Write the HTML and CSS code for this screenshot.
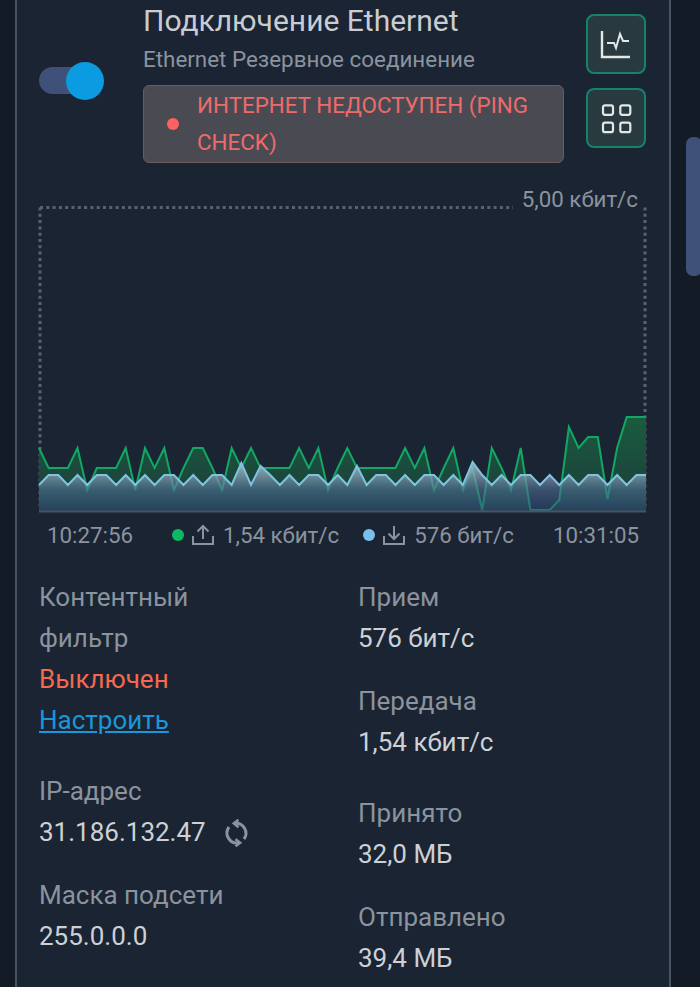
FILE: index.html
```html
<!DOCTYPE html>
<html>
<head>
	<title>Подключение Ethernet</title>
	<link rel="stylesheet" href="styles.css">
</head>
<body>
	<div class="page">
		<div class="card">
			<div class="header">
				<div class="toggle"><div class="knob"></div></div>
				<div class="info">
					<div class="title">Подключение Ethernet</div>
					<div class="subtitle">Ethernet Резервное соединение</div>
					<div class="status">
						<span class="status-dot"></span>
						<span class="status-text">ИНТЕРНЕТ НЕДОСТУПЕН (PING CHECK)</span>
					</div>
				</div>
				<div class="actions">
					<button class="icon-btn">
						<svg width="32" height="32" viewBox="0 0 32 32" fill="none" stroke="#e4e7e6" stroke-width="2.400">
							<path d="M2 3V29H30"/>
							<path d="M7 15H14L16 20L20 6L23 13H29" stroke-width="2"/>
						</svg>
					</button>
					<button class="icon-btn">
						<svg width="32" height="32" viewBox="0 0 32 32" fill="none" stroke="#e4e7e6" stroke-width="2.200">
							<rect x="3" y="3.300" width="10" height="9.500" rx="2"/>
							<rect x="20.300" y="3.300" width="10" height="9.500" rx="2"/>
							<rect x="3" y="20.700" width="10" height="9.500" rx="2"/>
							<rect x="20.300" y="20.700" width="10" height="9.500" rx="2"/>
						</svg>
					</button>
				</div>
			</div>

			<div class="chart">
				<svg class="chart-svg" width="612" height="308" viewBox="37 205 612 308" fill="none">
					<defs>
						<linearGradient id="greenFill" gradientUnits="userSpaceOnUse" x1="0" y1="417" x2="0" y2="511">
							<stop offset="0" stop-color="#1a5c3e"/>
							<stop offset="1" stop-color="#1c3c3c"/>
						</linearGradient>
						<linearGradient id="blueFill" gradientUnits="userSpaceOnUse" x1="0" y1="462" x2="0" y2="511">
							<stop offset="0" stop-color="#a8c0cc" stop-opacity="0.900"/>
							<stop offset="0.270" stop-color="#89a1b5" stop-opacity="0.750"/>
							<stop offset="0.570" stop-color="#4e6f93" stop-opacity="0.600"/>
							<stop offset="1" stop-color="#2e4a7c" stop-opacity="0.500"/>
						</linearGradient>
					</defs>
					<path class="grid" d="M40 207.500H513M40 207.500V510M645 207.500V510"/>
					<polygon fill="url(#greenFill)" points="39,511 39,448 48.600,468 58.300,468 67.900,468 77.500,448 87.200,490 96.800,468 106.400,468 116.100,468 125.700,448 135.300,490 145,448 154.600,468 164.300,448 173.900,490 183.500,468 193.200,448 202.800,448 212.400,468 222.100,490 231.700,448 241.300,468 251,448 260.600,468 270.200,468 279.900,468 289.500,468 299.100,448 308.800,468 318.400,448 328,490 337.700,468 347.300,448 357,468 366.600,468 376.200,468 385.900,468 395.500,468 405.100,448 414.800,468 424.400,448 434,490 443.700,468 453.300,448 462.900,490 472.600,468 482.200,510 491.800,448 501.500,468 511.100,490 520.700,448 530.400,510 540,510 549.700,510 559.300,500 568.900,427 578.600,448 588.200,437 597.800,437 607.500,499 617.100,448 626.700,417 636.400,417 646,417 646,511"/>
					<polyline class="line-up" points="39,448 48.600,468 58.300,468 67.900,468 77.500,448 87.200,490 96.800,468 106.400,468 116.100,468 125.700,448 135.300,490 145,448 154.600,468 164.300,448 173.900,490 183.500,468 193.200,448 202.800,448 212.400,468 222.100,490 231.700,448 241.300,468 251,448 260.600,468 270.200,468 279.900,468 289.500,468 299.100,448 308.800,468 318.400,448 328,490 337.700,468 347.300,448 357,468 366.600,468 376.200,468 385.900,468 395.500,468 405.100,448 414.800,468 424.400,448 434,490 443.700,468 453.300,448 462.900,490 472.600,468 482.200,510 491.800,448 501.500,468 511.100,490 520.700,448 530.400,510 540,510 549.700,510 559.300,500 568.900,427 578.600,448 588.200,437 597.800,437 607.500,499 617.100,448 626.700,417 636.400,417 646,417"/>
					<polygon fill="url(#blueFill)" points="39,511 39,485 48.600,475 58.300,475 67.900,485 77.500,475 87.200,485 96.800,475 106.400,475 116.100,485 125.700,475 135.300,485 145,475 154.600,485 164.300,475 173.900,475 183.500,485 193.200,475 202.800,485 212.400,475 222.100,475 231.700,485 241.300,463 251,485 260.600,466 270.200,475 279.900,485 289.500,475 299.100,485 308.800,475 318.400,475 328,485 337.700,475 347.300,485 357,466 366.600,485 376.200,475 385.900,475 395.500,485 405.100,475 414.800,485 424.400,475 434,475 443.700,485 453.300,475 462.900,485 472.600,462 482.200,475 491.800,485 501.500,475 511.100,485 520.700,475 530.400,475 540,485 549.700,475 559.300,485 568.900,475 578.600,485 588.200,475 597.800,475 607.500,485 617.100,475 626.700,485 636.400,475 646,475 646,511"/>
					<polyline class="line-down" points="39,485 48.600,475 58.300,475 67.900,485 77.500,475 87.200,485 96.800,475 106.400,475 116.100,485 125.700,475 135.300,485 145,475 154.600,485 164.300,475 173.900,475 183.500,485 193.200,475 202.800,485 212.400,475 222.100,475 231.700,485 241.300,463 251,485 260.600,466 270.200,475 279.900,485 289.500,475 299.100,485 308.800,475 318.400,475 328,485 337.700,475 347.300,485 357,466 366.600,485 376.200,475 385.900,475 395.500,485 405.100,475 414.800,485 424.400,475 434,475 443.700,485 453.300,475 462.900,485 472.600,462 482.200,475 491.800,485 501.500,475 511.100,485 520.700,475 530.400,475 540,485 549.700,475 559.300,485 568.900,475 578.600,485 588.200,475 597.800,475 607.500,485 617.100,475 626.700,485 636.400,475 646,475"/>
					<path class="axis" d="M39 511.500H646"/>
				</svg>
				<div class="chart-max">5,00 кбит/с</div>
			</div>

			<div class="legend">
				<span>10:27:56</span>
				<div class="legend-items">
					<span class="legend-dot green"></span>
					<svg class="legend-icon" width="24" height="22" viewBox="0 0 24 22" fill="none" stroke="#8b939e" stroke-width="2">
						<path d="M12 15V2M6.500 7.500L12 2L17.500 7.500M2 12V20H22V12"/>
					</svg>
					<span class="legend-value first">1,54 кбит/с</span>
					<span class="legend-dot blue"></span>
					<svg class="legend-icon" width="24" height="22" viewBox="0 0 24 22" fill="none" stroke="#8b939e" stroke-width="2">
						<path d="M12 2V15M6.500 9.500L12 15L17.500 9.500M2 12V20H22V12"/>
					</svg>
					<span class="legend-value">576 бит/с</span>
				</div>
				<span>10:31:05</span>
			</div>

			<div class="details">
				<div class="column">
					<div class="field wide">
						<div class="label">Контентный фильтр</div>
						<div class="off">Выключен</div>
						<a class="link" href="#">Настроить</a>
					</div>
					<div class="field">
						<div class="label">IP-адрес</div>
						<div class="value ip">31.186.132.47
							<svg width="30" height="30" viewBox="0 0 30 30" fill="none" stroke="#8b939e" stroke-width="3">
								<path d="M13 5.200A10 10 0 0 1 22 21"/>
								<path d="M17 24.800A10 10 0 0 1 7 9"/>
								<path d="M16.500 1.800L11.800 5.300L16.500 9.200" stroke-width="2.500"/>
								<path d="M13.500 21.300L18.200 24.800L13.500 28.300" stroke-width="2.500"/>
							</svg>
						</div>
					</div>
					<div class="field">
						<div class="label">Маска подсети</div>
						<div class="value">255.0.0.0</div>
					</div>
				</div>
				<div class="column">
					<div class="field">
						<div class="label">Прием</div>
						<div class="value">576 бит/с</div>
					</div>
					<div class="field wide">
						<div class="label">Передача</div>
						<div class="value">1,54 кбит/с</div>
					</div>
					<div class="field">
						<div class="label">Принято</div>
						<div class="value">32,0 МБ</div>
					</div>
					<div class="field">
						<div class="label">Отправлено</div>
						<div class="value">39,4 МБ</div>
					</div>
				</div>
			</div>
		</div>
		<div class="scroll-track"><div class="scroll-thumb"></div></div>
	</div>
</body>
</html>
```

FILE: styles.css
```css
html, body {
	margin: 0;
	padding: 0;
	background-color: #131b27;
}

.page {
	display: flex;
	width: 700px;
	height: 987px;
	overflow: hidden;
	font-family: Roboto, sans-serif;
}

.card {
	box-sizing: border-box;
	flex: none;
	width: 656px;
	margin-left: 15px;
	padding-left: 22px;
	background-color: #1a2433;
	border-left: 2px solid #4a5260;
	border-right: 2px solid #4a5260;
}

/* header */
.header {
	display: flex;
	height: 163px;
	padding-top: 4px;
	box-sizing: border-box;
}

.toggle {
	position: relative;
	width: 62px;
	height: 27px;
	margin-top: 63px;
	background-color: #3f5178;
	border-radius: 14px;
}

.knob {
	position: absolute;
	left: 27px;
	top: -5px;
	width: 38px;
	height: 38px;
	border-radius: 50%;
	background-color: #0a9be0;
}

.info {
	width: 421px;
	margin-left: 42px;
}

.title {
	font-size: 30px;
	line-height: 34px;
	color: #c9ccd0;
}

.subtitle {
	font-size: 22.400px;
	line-height: 30px;
	margin-top: 6px;
	color: #8b939e;
}

.status {
	display: flex;
	align-items: center;
	box-sizing: border-box;
	height: 78px;
	margin-top: 11px;
	padding-left: 23px;
	padding-right: 20px;
	background-color: #4a4b52;
	border: 1.500px solid #6f5a58;
	border-radius: 6px;
}

.status-dot {
	flex: none;
	width: 12px;
	height: 12px;
	border-radius: 50%;
	background-color: #ff6161;
}

.status-text {
	margin-left: 18px;
	font-size: 22.400px;
	line-height: 37px;
	color: #ee6a6b;
}

.actions {
	display: flex;
	flex-direction: column;
	gap: 14px;
	margin-left: 22px;
	margin-top: 10px;
}

.icon-btn {
	display: flex;
	align-items: center;
	justify-content: center;
	width: 60px;
	height: 60px;
	padding: 0;
	background-color: #283a40;
	border: 2px solid #148467;
	border-radius: 8px;
}

/* chart */
.chart {
	position: relative;
	height: 308px;
	margin-top: 42px;
}

.chart-svg {
	display: block;
	margin-left: -2px;
}

.grid {
	stroke: #5a626d;
	stroke-width: 3;
	stroke-dasharray: 3 3.300;
}

.line-up {
	stroke: #12a765;
	stroke-width: 2;
}

.line-down {
	stroke: #7fc4de;
	stroke-width: 2;
}

.axis {
	stroke: #4b5360;
	stroke-width: 2;
}

.chart-max {
	position: absolute;
	right: 31px;
	top: -20px;
	font-size: 22.300px;
	line-height: 28px;
	color: #8b939e;
}

.legend {
	display: flex;
	justify-content: space-between;
	align-items: center;
	width: 592px;
	margin-left: 8px;
	margin-top: 7px;
	height: 30px;
	font-size: 22.300px;
	color: #8b939e;
}

.legend-items {
	display: flex;
	align-items: center;
}

.legend-dot {
	width: 12px;
	height: 12px;
	border-radius: 50%;
}

.green {
	background-color: #0fb865;
}

.blue {
	background-color: #79c0ec;
}

.legend-icon {
	margin-left: 7px;
	margin-right: 8px;
}

.first {
	margin-right: 24px;
}

/* details */
.details {
	display: flex;
	margin-top: 27px;
}

.column {
	width: 319px;
	flex: none;
}

.field {
	margin-bottom: 22px;
}

.wide {
	margin-bottom: 30px;
}

.label {
	font-size: 26px;
	line-height: 41px;
	width: 200px;
	color: #8b939e;
}

.value {
	font-size: 26px;
	line-height: 41px;
	color: #cdd1d5;
}

.ip {
	display: flex;
	align-items: center;
	gap: 16px;
}

.off {
	font-size: 26px;
	line-height: 41px;
	color: #f4694f;
}

.link {
	font-size: 26px;
	line-height: 41px;
	color: #1c96d8;
}

/* scrollbar */
.scroll-track {
	flex: 1;
	padding-top: 137px;
	padding-left: 15px;
}

.scroll-thumb {
	width: 16px;
	height: 139px;
	background-color: #3f5178;
	border-radius: 7px;
}
```
